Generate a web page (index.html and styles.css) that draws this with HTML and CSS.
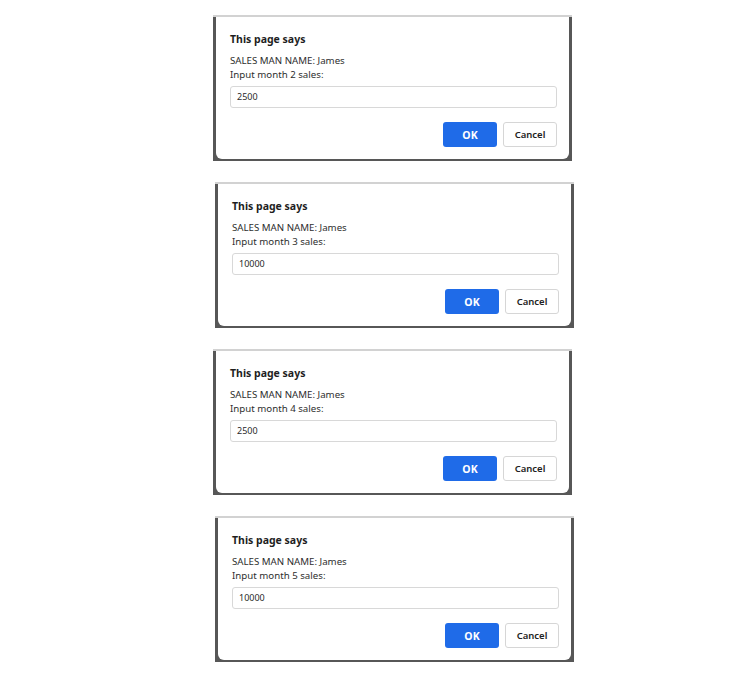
FILE: index.html
```html
<!DOCTYPE html>
<html>
<head>
<meta charset="utf-8">
<link rel="stylesheet" href="styles.css">
</head>
<body>
<div class="page">
  <div class="shot">
    <div class="frame">
      <div class="dialog">
        <div class="title">This page says</div>
        <div class="msg">SALES MAN NAME: James<br>Input month 2 sales:</div>
        <div class="field">2500</div>
        <div class="actions"><span class="btn ok">OK</span><span class="btn cancel">Cancel</span></div>
      </div>
    </div>
  </div>
  <div class="shot shot-b">
    <div class="frame">
      <div class="dialog">
        <div class="title">This page says</div>
        <div class="msg">SALES MAN NAME: James<br>Input month 3 sales:</div>
        <div class="field">10000</div>
        <div class="actions"><span class="btn ok">OK</span><span class="btn cancel">Cancel</span></div>
      </div>
    </div>
  </div>
  <div class="shot shot-c">
    <div class="frame">
      <div class="dialog">
        <div class="title">This page says</div>
        <div class="msg">SALES MAN NAME: James<br>Input month 4 sales:</div>
        <div class="field">2500</div>
        <div class="actions"><span class="btn ok">OK</span><span class="btn cancel">Cancel</span></div>
      </div>
    </div>
  </div>
  <div class="shot shot-b">
    <div class="frame">
      <div class="dialog">
        <div class="title">This page says</div>
        <div class="msg">SALES MAN NAME: James<br>Input month 5 sales:</div>
        <div class="field">10000</div>
        <div class="actions"><span class="btn ok">OK</span><span class="btn cancel">Cancel</span></div>
      </div>
    </div>
  </div>
</div>
</body>
</html>
```
FILE: styles.css
```css
html, body {
  margin: 0;
  padding: 0;
  background: #ffffff;
}
body {
  font-family: "Noto Sans", "Open Sans", sans-serif;
  color: #222;
}
.page {
  display: flex;
  flex-direction: column;
  gap: 21px;
  padding: 15px 0 0 213px;
}
.shot {
  width: 359px;
  border-top: 2px solid #d2d2d2;
}
.shot-b {
  margin-left: 2px;
}
.shot-c {
  margin-left: 0;
}
.frame {
  margin-top: 3px;
  background: #575757;
  padding: 0 3px 2px;
}
.dialog {
  margin-top: -3px;
  background: #fff;
  border-radius: 0 0 6px 6px;
  padding: 15px 12px 12px 14px;
}
.title {
  font-size: 10.5px;
  line-height: 14px;
  font-weight: 700;
  color: #1e1e1e;
}
.msg {
  margin-top: 8px;
  font-size: 9.7px;
  line-height: 13.5px;
  color: #2e2e2e;
}
.field {
  margin-top: 5px;
  height: 20px;
  border: 1px solid #d8d8d8;
  border-radius: 3px;
  font-size: 9px;
  line-height: 20px;
  padding-left: 6px;
  color: #2a2a2a;
}
.actions {
  margin-top: 14px;
  display: flex;
  justify-content: flex-end;
  gap: 6px;
}
.btn {
  width: 54px;
  height: 25px;
  box-sizing: border-box;
  border-radius: 3px;
  display: flex;
  align-items: center;
  justify-content: center;
  font-size: 9.5px;
}
.ok {
  background: #1f6be8;
  color: #fff;
  font-weight: 700;
  font-size: 10.5px;
}
.cancel {
  background: #fff;
  border: 1px solid #d6d6d6;
  color: #222;
  font-weight: 600;
}
```
